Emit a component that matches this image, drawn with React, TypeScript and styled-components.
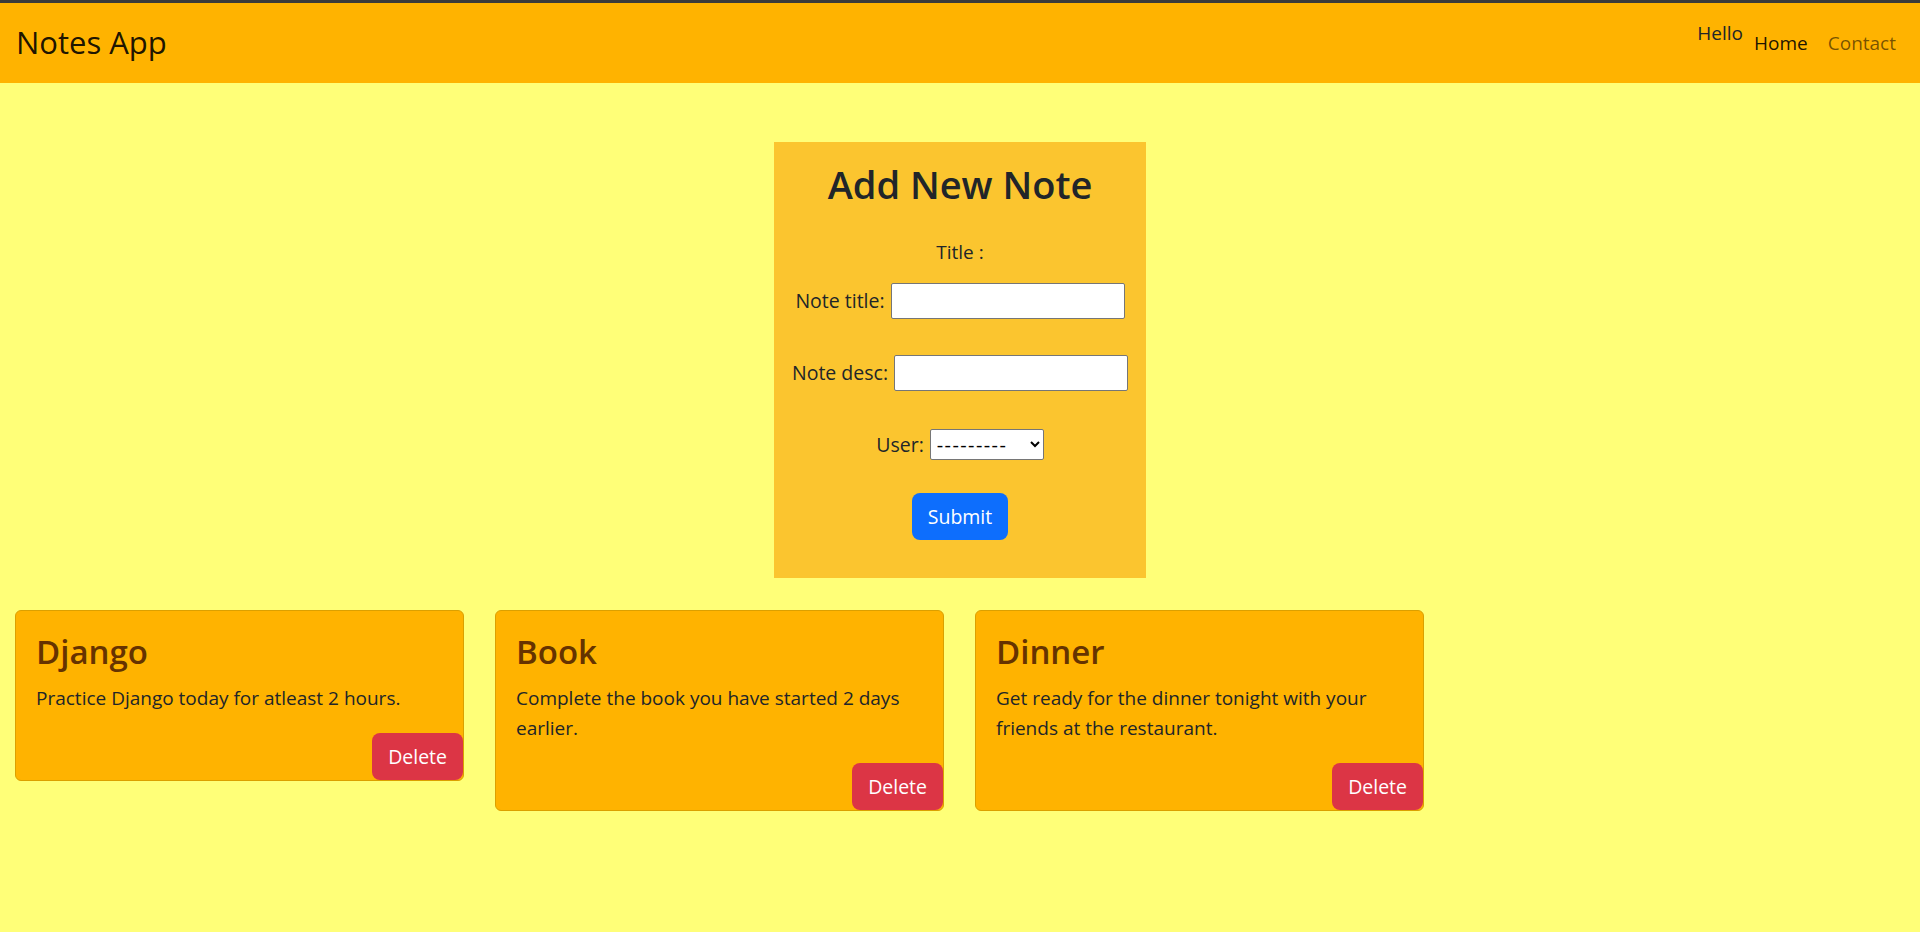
import React from "react";
import styled, { createGlobalStyle } from "styled-components";

const GlobalStyle = createGlobalStyle`
  html, body { margin: 0; padding: 0; }
  body {
    background: #ffff78;
    font-family: "Open Sans", "Noto Sans", sans-serif;
    color: #212529;
  }
  *, *::before, *::after { box-sizing: border-box; }
`;

const Page = styled.div`
  min-height: 932px;
  background: #ffff78;
`;

const Navbar = styled.nav`
  height: 83px;
  border-top: 3px solid #3b3b3b;
  background: #ffb300;
  display: flex;
  align-items: center;
  justify-content: space-between;
  padding: 0 14px 0 16px;
`;

const Brand = styled.a`
  font-size: 31px;
  line-height: 1.2;
  color: rgba(0, 0, 0, 0.9);
  text-decoration: none;
`;

const NavRight = styled.div`
  display: flex;
  align-items: center;
`;

const Greeting = styled.span`
  font-size: 19px;
  line-height: 1.5;
  margin: 0 1px 20px 0;
  color: #212529;
`;

const NavLink = styled.a<{ $muted?: boolean }>`
  padding: 0 10px;
  font-size: 19px;
  line-height: 1.5;
  color: ${(p) => (p.$muted ? "rgba(0, 0, 0, 0.55)" : "rgba(0, 0, 0, 0.9)")};
  text-decoration: none;
`;

const Main = styled.main`
  padding-top: 59px;
`;

const FormPanel = styled.form`
  width: 372px;
  margin: 0 auto;
  background: #fbc52f;
  padding: 19px 0 38px;
  display: flex;
  flex-direction: column;
  align-items: center;
`;

const FormHeading = styled.h1`
  margin: 0 0 28px;
  font-size: 38px;
  font-weight: 600;
  line-height: 1.26;
  color: #212529;
`;

const FormCaption = styled.div`
  font-size: 19px;
  line-height: 30px;
  margin-bottom: 16px;
`;

const FieldList = styled.div`
  display: flex;
  flex-direction: column;
  align-items: center;
  gap: 36px;
`;

const Field = styled.div`
  display: flex;
  align-items: center;
  gap: 6px;
  height: 36px;
  font-size: 19.5px;
`;

const TextInput = styled.input`
  width: 234px;
  height: 36px;
  border: 1px solid #767676;
  border-radius: 2px;
  background: #fff;
  font-size: 16px;
  padding: 1px 4px;
`;

const Select = styled.select`
  width: 114px;
  height: 31px;
  border: 1px solid #767676;
  border-radius: 2px;
  background: #fff;
  font-size: 20px;
  letter-spacing: 1.4px;
  font-family: "Open Sans", sans-serif;
  color: #000;
  padding: 0 2px;
`;

const Button = styled.button<{ $variant: "primary" | "danger" }>`
  height: 47px;
  padding: 0 16px;
  border: none;
  border-radius: 8px;
  font-family: inherit;
  font-size: 19.5px;
  color: #fff;
  background: ${(p) => (p.$variant === "primary" ? "#0d6efd" : "#dc3545")};
  cursor: pointer;
`;

const SubmitRow = styled.div`
  margin-top: 30px;
`;

const CardGrid = styled.section`
  margin-top: 32px;
  padding: 0 16px 0 15px;
  display: grid;
  grid-template-columns: repeat(4, 1fr);
  column-gap: 31px;
  align-items: start;
`;

const Card = styled.article`
  background: #ffb300;
  border: 1px solid #dba000;
  border-radius: 6px;
  display: flex;
  flex-direction: column;
`;

const CardBody = styled.div`
  padding: 20px 20px 0;
`;

const CardTitle = styled.h2`
  margin: 0 0 10px;
  font-size: 33px;
  font-weight: 600;
  line-height: 42px;
  color: #663300;
`;

const CardText = styled.p`
  margin: 0 0 20px;
  font-size: 19px;
  line-height: 30px;
`;

const CardFooter = styled.div`
  display: flex;
  justify-content: flex-end;
`;

const notes = [
  { title: "Django", desc: "Practice Django today for atleast 2 hours." },
  { title: "Book", desc: "Complete the book you have started 2 days earlier." },
  { title: "Dinner", desc: "Get ready for the dinner tonight with your friends at the restaurant." },
];

export default function App() {
  return (
    <Page>
      <GlobalStyle />
      <Navbar>
        <Brand href="#">Notes App</Brand>
        <NavRight>
          <Greeting>Hello</Greeting>
          <NavLink href="#">Home</NavLink>
          <NavLink href="#" $muted>
            Contact
          </NavLink>
        </NavRight>
      </Navbar>
      <Main>
        <FormPanel onSubmit={(e) => e.preventDefault()}>
          <FormHeading>Add New Note</FormHeading>
          <FormCaption>Title :</FormCaption>
          <FieldList>
            <Field>
              <label htmlFor="title">Note title:</label>
              <TextInput id="title" type="text" />
            </Field>
            <Field>
              <label htmlFor="desc">Note desc:</label>
              <TextInput id="desc" type="text" />
            </Field>
            <Field>
              <label htmlFor="user">User:</label>
              <Select id="user" defaultValue="">
                <option value="">---------</option>
              </Select>
            </Field>
          </FieldList>
          <SubmitRow>
            <Button type="submit" $variant="primary">
              Submit
            </Button>
          </SubmitRow>
        </FormPanel>
        <CardGrid>
          {notes.map((n) => (
            <Card key={n.title}>
              <CardBody>
                <CardTitle>{n.title}</CardTitle>
                <CardText>{n.desc}</CardText>
              </CardBody>
              <CardFooter>
                <Button type="button" $variant="danger">
                  Delete
                </Button>
              </CardFooter>
            </Card>
          ))}
        </CardGrid>
      </Main>
    </Page>
  );
}
